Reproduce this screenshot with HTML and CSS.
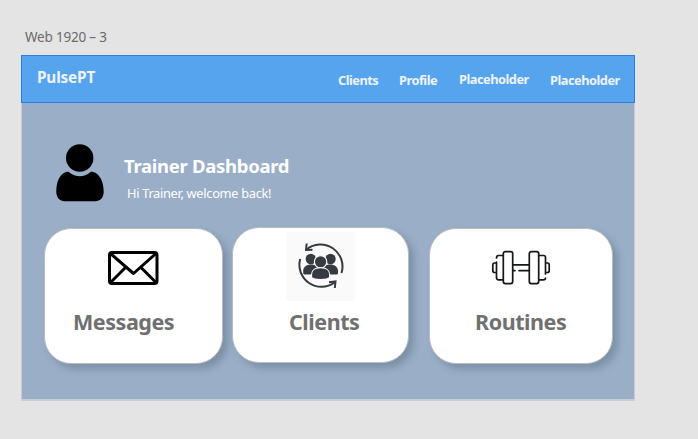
FILE: index.html
```html
<!DOCTYPE html>
<html lang="en">
<head>
<meta charset="utf-8">
<title>PulsePT</title>
<link rel="stylesheet" href="styles.css">
</head>
<body>
<div class="board-label">Web 1920 – 3</div>
<main class="board">
  <header class="navbar">
    <div class="brand">PulsePT</div>
    <nav class="links">
      <a class="link link-clients">Clients</a>
      <a class="link link-profile">Profile</a>
      <a class="link link-raised">Placeholder</a>
      <a class="link">Placeholder</a>
    </nav>
  </header>
  <section class="welcome">
    <svg class="avatar" width="48" height="58" viewBox="0 0 48 58">
      <circle cx="23.7" cy="14" r="13.7"/>
      <path d="M10.5 28C12 27.6 13 28 14.5 29.2C20 33.2 27.5 33.2 33 29.2C34.500 28 35.500 27.600 37 28C43.500 29.500 47.700 37.500 47.700 47.500C47.700 53.500 44.500 57.300 39 57.300H9C3.500 57.300 .3 53.500 .3 47.500C.3 37.500 4 29.500 10.500 28Z"/>
    </svg>
    <div class="greeting">
      <h1 class="title">Trainer Dashboard</h1>
      <p class="subtitle">Hi Trainer, welcome back!</p>
    </div>
  </section>
  <section class="cards">
    <article class="card card-messages">
      <svg class="icon icon-mail" width="52" height="36" viewBox="0 0 52 36" fill="none" stroke="#000" stroke-width="3" stroke-linejoin="round">
        <rect x="1.500" y="2.500" width="47.500" height="31" rx="2.500"/>
        <path d="M2.500 3.500L25.500 23.500L48 3.500M2.500 32.500L18 17M48 32.500L32.500 17"/>
      </svg>
      <h2 class="name">Messages</h2>
    </article>
    <article class="card card-clients">
      <svg class="icon icon-people" width="69" height="69" viewBox="0 0 69 69">
        <rect width="69" height="69" fill="#fafafa"/>
        <g fill="none" stroke="#363b41" stroke-width="2">
          <path d="M20.500 17.500A22 22 0 0 1 55.500 41M48.500 50.500A22 22 0 0 1 14.200 27"/>
          <path d="M20.700 11.500L20 18L26.500 17.800M43 50.300L49.500 49.500L48.800 56"/>
        </g>
        <g fill="#363b41">
          <circle cx="24.800" cy="27" r="5.200"/>
          <circle cx="44.500" cy="27" r="5.200"/>
          <path d="M17.200 41.500V39C17.200 35 20.500 32.500 25 32.500S33 35 33 39V42.500H19Q17.200 42.500 17.200 41.500ZM52 41.500V39C52 35 48.700 32.500 44.200 32.500S36 35 36 39V42.500H50.200Q52 42.500 52 41.500Z"/>
          <g stroke="#fafafa" stroke-width="1.200">
            <circle cx="34.600" cy="29.800" r="6.200"/>
            <path d="M25.500 45.500V42.500C25.500 38 29.500 35.700 34.600 35.700S43.700 38 43.700 42.500V45.500C41 48.300 28.200 48.300 25.500 45.500Z"/>
          </g>
        </g>
      </svg>
      <h2 class="name">Clients</h2>
    </article>
    <article class="card card-routines">
      <svg class="icon icon-dumbbell" width="60" height="36" viewBox="0 0 60 36" fill="none" stroke="#151719" stroke-width="1.700" stroke-linecap="round" stroke-linejoin="round">
        <rect x="12.300" y="1.600" width="9.400" height="32" rx="2"/>
        <rect x="38.300" y="1.600" width="9.400" height="32" rx="2"/>
        <path d="M22 14.800H38M22 20.600H24M28 20.600H38M11.800 5.500H7.500Q5.500 5.500 5.500 8M5.500 12V27.500Q5.500 29.800 7.500 29.800H11.800M48.200 5.500H52.500Q54.500 5.500 54.500 7.500V24M54.500 28Q54.500 29.800 52.500 29.800H48.200M5 13H3.500Q1.800 13 1.800 15V20.500Q1.800 22.500 3.500 22.500H5M55 13H56.500Q58.200 13 58.200 15V20.500Q58.200 22.500 56.500 22.500H55"/>
      </svg>
      <h2 class="name">Routines</h2>
    </article>
  </section>
</main>
</body>
</html>
```
FILE: styles.css
```css
* { box-sizing: border-box; }
body {
  margin: 0;
  padding: 28px 63px 0 21px;
  height: 439px;
  background: #e4e4e4;
  font-family: "Noto Sans", "Open Sans", sans-serif;
}
.board-label {
  height: 27px;
  padding-left: 4px;
  font-size: 13.500px;
  line-height: 19px;
  letter-spacing: -0.2px;
  color: #6b6b6b;
}
.board {
  width: 614px;
  height: 346px;
  border: 1px solid #c9ced5;
  border-bottom-width: 2px;
  background: #9aaec7;
}
.navbar {
  display: flex;
  justify-content: space-between;
  height: 48px;
  margin: -1px -1px 0;
  padding: 0 13px 0 15px;
  border: 1px solid #2a80e2;
  background: #56a3ee;
  color: #eef3f9;
  font-weight: 700;
}
.brand {
  padding-top: 11px;
  font-size: 15.300px;
  line-height: 20px;
  letter-spacing: -0.15px;
}
.links {
  display: flex;
  gap: 20px;
  padding-top: 15px;
  font-size: 12.800px;
  line-height: 18px;
  letter-spacing: -0.5px;
}
.link { width: 71px; white-space: nowrap; }
.link-clients { width: 41px; }
.link-profile { width: 40px; }
.link-raised { margin-top: -1px; }
.welcome {
  display: flex;
  height: 124px;
  padding: 41px 0 0 34px;
}
.avatar { flex: none; }
.greeting { padding: 9px 0 0 20px; color: #fff; }
.title {
  margin: 0;
  font-size: 18.500px;
  line-height: 26px;
  letter-spacing: -0.3px;
}
.subtitle {
  margin: 5px 0 0 3px;
  font-size: 12.800px;
  line-height: 19px;
  letter-spacing: -0.3px;
}
.cards { display: flex; padding-left: 22px; }
.card {
  display: flex;
  flex-direction: column;
  align-items: flex-start;
  height: 136px;
  margin-top: 1px;
  border: 1px solid #b8bdc3;
  border-radius: 27px;
  background: #fff;
  box-shadow: 5px 5px 7px rgba(80, 100, 120, .4);
}
.card-messages { width: 179px; padding: 21px 0 0 28px; }
.card-clients { width: 177px; margin: 0 0 0 9px; padding: 4px 0 0 53px; }
.card-routines { width: 184px; margin-left: 20px; padding: 21px 0 0 45px; }
.icon { flex: none; }
.icon-mail { margin-left: 35px; }
.icon-dumbbell { margin-left: 16px; }
.name {
  margin: 21px 0 0;
  font-size: 21.500px;
  line-height: 30px;
  letter-spacing: -0.45px;
  color: #707070;
}
.card-clients .name { margin: 6px 0 0 3px; }
```
